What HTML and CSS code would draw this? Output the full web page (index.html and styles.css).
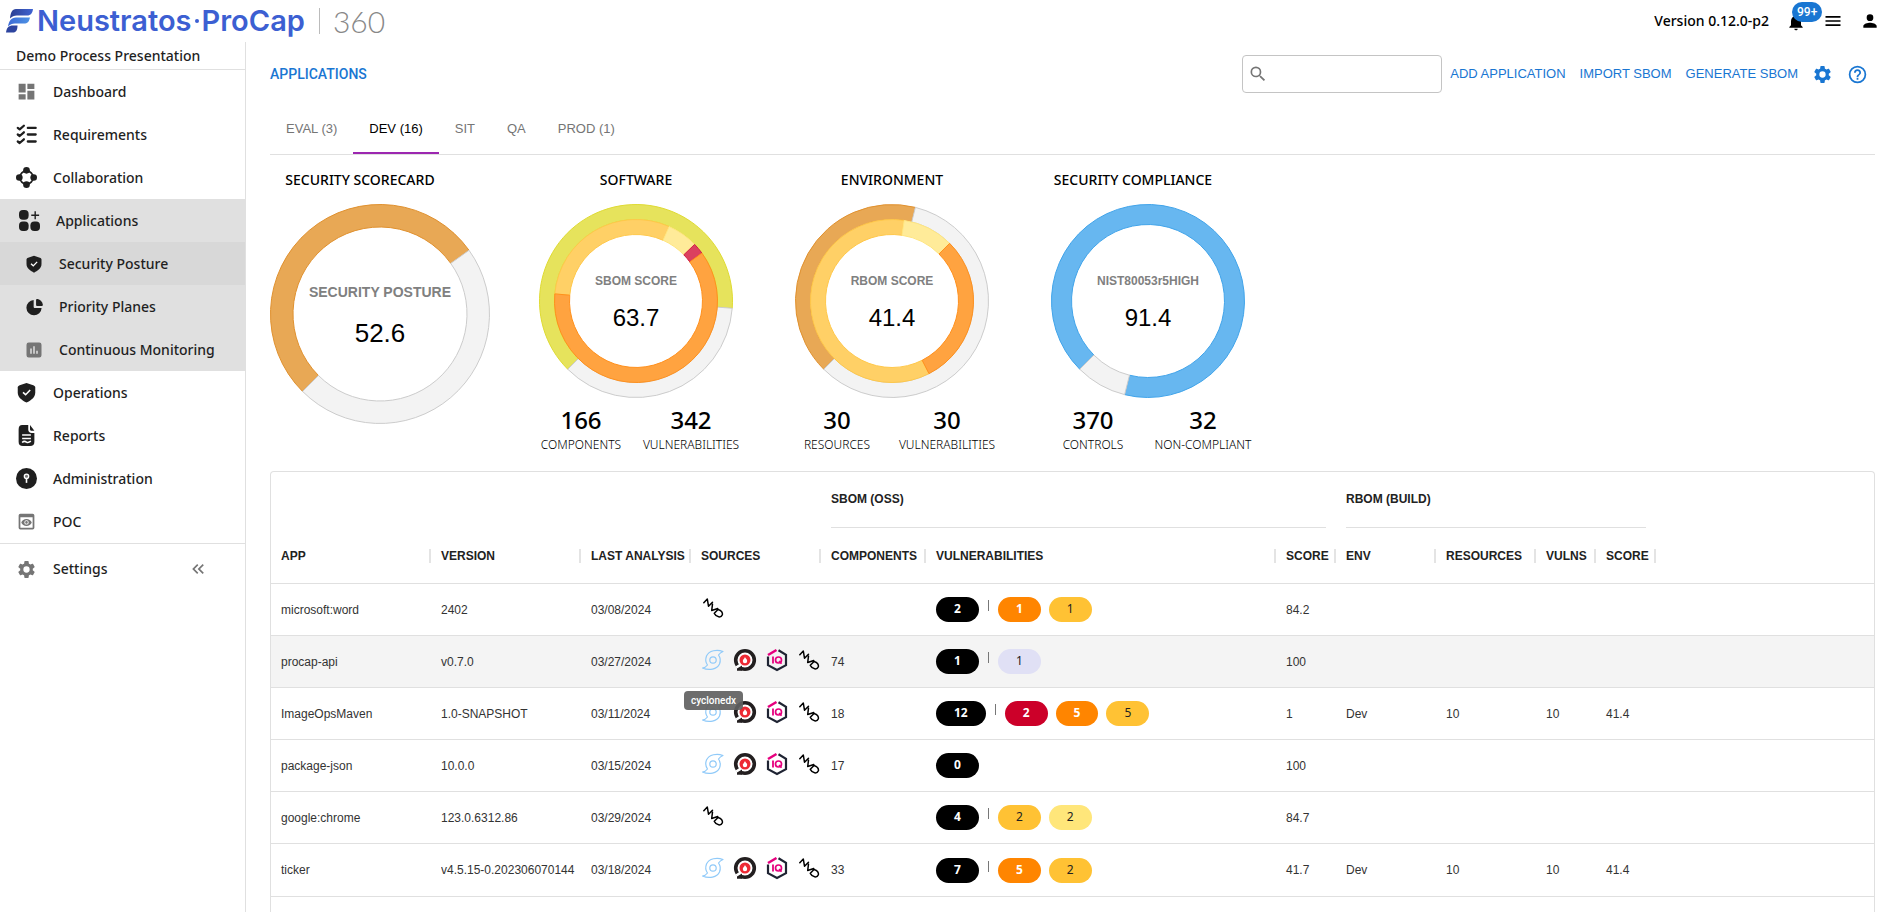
FILE: index.html
```html
<!DOCTYPE html>
<html lang="en">
<head>
<meta charset="utf-8">
<title>Neustratos ProCap 360 - Applications</title>
<link rel="stylesheet" href="styles.css">
</head>
<body>
<svg class="sprite" aria-hidden="true">
  <symbol id="i-cyclone" viewBox="0 0 24 24"><g fill="none" stroke="#90caf9" stroke-width="1.2" stroke-linejoin="round"><circle cx="12" cy="12" r="3.200"/><path d="M22 3.500C16 1 8 2.500 5.500 8C4 12 5 15 6.500 17C5 19 3.500 19.800 1.500 20C8 22.800 16 21.500 18.500 16C20 12 19 9 17.500 7C19 5 20.300 4.200 22 3.500Z"/></g></symbol>
  <symbol id="i-target" viewBox="0 0 24 24"><circle cx="12" cy="12" r="9.300" fill="#fff" stroke="#231f20" stroke-width="3.600"/><path d="M2.500 18.500L8.500 14.500L9.500 17L5.500 21.500Z" fill="#fff"/><path d="M4 20.500L9 17.500V22.800H4Z" fill="#231f20"/><circle cx="12" cy="12" r="5.500" fill="#ed2a34"/><path d="M12 9C12.300 10.400 14.200 11.200 14.200 13A2.200 2.200 0 0 1 9.800 13C9.800 11.800 11 11.200 12 9Z" fill="#fff"/></symbol>
  <symbol id="i-iq" viewBox="0 0 24 24"><g fill="none" stroke-width="2.200"><path d="M13.500 2.200L21 6.800V17.200L12 22L3 17.200V8.500" stroke="#1f2433"/><path d="M3 7L11.500 2" stroke="#e6007e" stroke-width="2.600"/><path d="M8 8.500V15.500" stroke="#e6007e" stroke-width="1.800"/><circle cx="13.500" cy="12" r="3" stroke="#e6007e" stroke-width="1.700"/><path d="M14 13L16.500 15.800" stroke="#e6007e" stroke-width="1.600"/></g></symbol>
  <symbol id="i-nvd" viewBox="0 0 24 24"><path d="M2.800 6.800L6.300 3L7.500 10.200L11.500 6.200M11.500 8.200L10.700 14.500L16.800 12.500M13.300 17.300L17 13.500C20 14.500 21.800 16.500 21.400 18.800C20 22 15.500 21.500 13.300 17.300Z" fill="none" stroke="#000" stroke-width="1.500" stroke-linejoin="round" stroke-linecap="round"/></symbol>
  <symbol id="i-gear" viewBox="0 0 24 24"><path d="M19.140 12.940c.04-.3.06-.61.06-.94s-.02-.64-.07-.94l2.030-1.580a.49.490 0 0 0 .12-.61l-1.920-3.320a.49.490 0 0 0-.59-.22l-2.390.96c-.5-.38-1.030-.7-1.620-.94l-.36-2.540a.48.480 0 0 0-.48-.41h-3.840a.47.470 0 0 0-.47.410l-.36 2.540c-.59.240-1.130.570-1.620.940l-2.390-.96a.48.480 0 0 0-.59.220L2.740 8.870a.47.470 0 0 0 .12.610l2.030 1.580c-.05.300-.09.630-.09.940s.02.640.070.940l-2.030 1.580a.49.490 0 0 0-.12.610l1.920 3.320c.12.220.370.290.590.220l2.390-.96c.5.380 1.030.700 1.620.940l.36 2.540c.05.240.240.410.480.410h3.840c.24 0 .44-.17.470-.41l.36-2.540c.59-.24 1.130-.56 1.620-.94l2.390.96c.22.080.470 0 .59-.22l1.920-3.320a.47.470 0 0 0-.12-.61zM12 15.600A3.600 3.600 0 1 1 12 8.400a3.600 3.600 0 0 1 0 7.200"/></symbol>
  <symbol id="i-shield" viewBox="0 0 24 24"><path d="M12 1L4.200 3.600C2.800 4.100 2 4.900 2 6.400V12C2 17.500 6.500 20.800 12 23.500C17.500 20.800 22 17.500 22 12V6.400C22 4.900 21.200 4.100 19.800 3.600Z"/><path d="M8 11.800L11 14.500L16.200 9.200" fill="none" stroke="#fff" stroke-width="1.800"/></symbol>
</svg>

<header class="topbar">
  <div class="brand">
    <svg class="brand-mark" viewBox="0 0 28 24" aria-hidden="true"><defs><linearGradient id="g1"><stop offset="0" stop-color="#2b3f92"/><stop offset="1" stop-color="#3f63d2"/></linearGradient><linearGradient id="g2"><stop offset="0" stop-color="#3b6ad6"/><stop offset="1" stop-color="#4d92e4"/></linearGradient></defs><path d="M10 0H27C26.500 4 25 6.500 21 6.500H11C8 6.500 6 7.500 4 9.500C4.500 4 6 0 10 0Z" fill="url(#g1)"/><path d="M10 8.500H24C23 13 21.500 14.500 18 14.500H9C6 14.500 4 15.500 2 17.500C3 12 5 8.500 10 8.500Z" fill="url(#g2)"/><path d="M7 16.500H11.500C11.500 21 10 23.500 7 23.500H0C.5 19 2.500 16.500 7 16.500Z" fill="#2d449f"/></svg>
    <span class="brand-name">Neustratos</span><span class="brand-dot"></span><span class="brand-name">ProCap</span>
    <span class="brand-edition">360</span>
  </div>
  <div class="topbar-tools">
    <span class="version">Version 0.12.0-p2</span>
    <button class="icon-btn bell" aria-label="Notifications"><svg viewBox="0 0 24 24"><path d="M12 22c1.100 0 2-.9 2-2h-4a2 2 0 0 0 2 2m6-6v-5c0-3.070-1.640-5.640-4.500-6.320V4a1.500 1.500 0 0 0-3 0v.68C7.630 5.360 6 7.920 6 11v5l-2 2v1h16v-1z"/></svg><span class="badge">99+</span></button>
    <button class="icon-btn" aria-label="Menu"><svg viewBox="0 0 24 24"><path d="M3 18h18v-2H3zm0-5h18v-2H3zm0-7v2h18V6z"/></svg></button>
    <button class="icon-btn" aria-label="Account"><svg viewBox="0 0 24 24"><path d="M12 12a4 4 0 1 0 0-8 4 4 0 0 0 0 8m0 2c-2.670 0-8 1.340-8 4v2h16v-2c0-2.660-5.330-4-8-4"/></svg></button>
  </div>
</header>

<div class="shell">
  <nav class="sidebar" aria-label="Main">
    <div class="project">Demo Process Presentation</div>
    <a class="nav-item" href="#"><svg class="grey" viewBox="0 0 24 24"><path d="M3 13h8V3H3zm0 8h8v-6H3zm10 0h8V11h-8zm0-18v6h8V3z"/></svg>Dashboard</a>
    <a class="nav-item" href="#"><svg viewBox="0 0 24 24"><path d="M2 4.500L4.200 6.200L9 2M2 12L4.200 13.700L9 9.500M2 20L4.200 21.700L9 17.500M13.500 4.500H22.500M13.500 12H22.500M13.500 20H22.500" fill="none" stroke="currentColor" stroke-width="2.600" stroke-linecap="round" stroke-linejoin="round"/></svg>Requirements</a>
    <a class="nav-item" href="#"><svg viewBox="0 0 24 24"><circle cx="12" cy="12" r="7.600" fill="none" stroke="currentColor" stroke-width="2"/><circle cx="12" cy="3.800" r="3.800"/><circle cx="12" cy="20.200" r="3.800"/><circle cx="3.800" cy="12" r="3.800"/><circle cx="20.200" cy="12" r="3.800"/></svg>Collaboration</a>
    <div class="nav-group">
      <a class="nav-item nav-parent" href="#"><svg viewBox="0 0 24 24"><rect x="0" y="0" width="11" height="11" rx="4.500"/><rect x="0" y="13" width="11" height="11" rx="4.500"/><rect x="13" y="13" width="11" height="11" rx="4.500"/><path d="M18.500 1.500V10.500M14 6H23" stroke="currentColor" stroke-width="1.600"/></svg>Applications</a>
      <a class="nav-item nav-sub active" href="#"><svg viewBox="0 0 24 24"><use href="#i-shield"/></svg>Security Posture</a>
      <a class="nav-item nav-sub" href="#"><svg viewBox="-2 -1 26 26"><path d="M10.500 2V11.500C10.500 12.800 11.200 13.500 12.500 13.500H22A11 11 0 1 1 10.500 2Z"/><path d="M14 2C14 .500 15 0 16.500.400C20 1.500 22.500 4 23.600 7.500C24 9 23.500 10.500 22 10.500H15.500C14.500 10.500 14 10 14 9Z"/></svg>Priority Planes</a>
      <a class="nav-item nav-sub" href="#"><svg class="grey" viewBox="0 0 24 24"><path d="M19 2H5a3 3 0 0 0-3 3v14a3 3 0 0 0 3 3h14a3 3 0 0 0 3-3V5a3 3 0 0 0-3-3M9 17H7v-7h2zm4 0h-2V7h2zm4 0h-2v-4h2z"/></svg>Continuous Monitoring</a>
    </div>
    <a class="nav-item" href="#"><svg viewBox="0 0 24 24"><use href="#i-shield"/></svg>Operations</a>
    <a class="nav-item" href="#"><svg viewBox="0 0 24 24"><path d="M7 0H14V5C14 7.500 15.500 9 18 9H21V19C21 22.500 19.500 24 16 24H8C4.500 24 3 22.500 3 19V5C3 1.500 4.500 0 7 0ZM16 0L21 6.500H18C16.500 6.500 16 6 16 4.500Z"/><path d="M7 11.500H17M7 15.500H17M7 20C9 18 10.500 18.500 12 19.500S15 20 17 18.500" fill="none" stroke="#fff" stroke-width="1.700"/></svg>Reports</a>
    <a class="nav-item" href="#"><svg viewBox="0 0 24 24"><circle cx="12" cy="12" r="12"/><circle cx="12" cy="9.500" r="2.500" fill="#777" stroke="#fff" stroke-width="1.500"/><path d="M12 12V17" stroke="#fff" stroke-width="1.800"/></svg>Administration</a>
    <a class="nav-item" href="#"><svg class="grey" viewBox="0 0 24 24"><path d="M19 3H5a2 2 0 0 0-2 2v14a2 2 0 0 0 2 2h14a2 2 0 0 0 2-2V5a2 2 0 0 0-2-2m0 16H5V7h14zm-5.500-6a1.500 1.500 0 1 1-3 0 1.500 1.500 0 0 1 3 0M12 9c-2.730 0-5.060 1.660-6 4 .94 2.340 3.270 4 6 4s5.060-1.660 6-4c-.94-2.340-3.270-4-6-4m0 6.500a2.500 2.500 0 1 1 0-5 2.500 2.500 0 0 1 0 5"/></svg>POC</a>
    <div class="nav-footer">
      <a class="nav-item" href="#"><svg class="grey" viewBox="0 0 24 24"><use href="#i-gear"/></svg>Settings</a>
      <button class="collapse" aria-label="Collapse menu"><svg viewBox="0 0 24 24"><path d="M17.590 18L19 16.590 14.420 12 19 7.410 17.590 6l-6 6zM11 18l1.410-1.410L7.830 12l4.580-4.590L11 6l-6 6z"/></svg></button>
    </div>
  </nav>

  <main class="content">
    <div class="page-head">
      <h1>APPLICATIONS</h1>
      <div class="actions">
        <label class="search"><svg viewBox="0 0 24 24"><path d="M15.500 14h-.79l-.28-.27A6.470 6.470 0 0 0 16 9.500 6.500 6.500 0 1 0 9.500 16c1.610 0 3.090-.59 4.230-1.570l.27.280v.79l5 4.990L20.490 19zm-6 0a4.500 4.500 0 1 1 0-9 4.500 4.500 0 0 1 0 9"/></svg><input type="search" aria-label="Search applications"></label>
        <button class="link-btn">ADD APPLICATION</button>
        <button class="link-btn">IMPORT SBOM</button>
        <button class="link-btn">GENERATE SBOM</button>
        <button class="tool-btn" aria-label="Settings"><svg viewBox="0 0 24 24"><use href="#i-gear"/></svg></button>
        <button class="tool-btn" aria-label="Help"><svg viewBox="0 0 24 24"><path d="M11 18h2v-2h-2zm1-16a10 10 0 1 0 0 20 10 10 0 0 0 0-20m0 18a8 8 0 1 1 0-16 8 8 0 0 1 0 16m0-14a4 4 0 0 0-4 4h2a2 2 0 1 1 4 0c0 2-3 1.750-3 5h2c0-2.250 3-2.500 3-5a4 4 0 0 0-4-4"/></svg></button>
      </div>
    </div>

    <div class="tabs" role="tablist">
      <button class="tab" role="tab">EVAL (3)</button>
      <button class="tab selected" role="tab" aria-selected="true">DEV (16)</button>
      <button class="tab" role="tab">SIT</button>
      <button class="tab" role="tab">QA</button>
      <button class="tab" role="tab">PROD (1)</button>
    </div>

    <section class="scores">
      <article class="card card-main">
        <h2>SECURITY SCORECARD</h2>
        <div class="gauge large"><svg viewBox="-110 -110 220 220" data-rings='[[87,109.5,[[225,414.4,"amber"],[54.4,225,"rest"]]]]'></svg><div class="gauge-text"><span class="gauge-label">SECURITY POSTURE</span><span class="gauge-value">52.6</span></div></div>
      </article>
      <article class="card">
        <h2>SOFTWARE</h2>
        <div class="gauge"><svg viewBox="-97 -97 194 194" data-rings='[[81.500,96.500,[[225,454.3,"olive"],[94.3,225,"rest"]]],[66.500,81.500,[[275,384,"yellow"],[24,46,"pale"],[46,54,"red"],[54,275,"orange"]]]]'></svg><div class="gauge-text"><span class="gauge-label">SBOM SCORE</span><span class="gauge-value">63.7</span></div></div>
        <dl class="counts"><div><dt>COMPONENTS</dt><dd>166</dd></div><div><dt>VULNERABILITIES</dt><dd>342</dd></div></dl>
      </article>
      <article class="card">
        <h2>ENVIRONMENT</h2>
        <div class="gauge"><svg viewBox="-97 -97 194 194" data-rings='[[81.500,96.500,[[225,374,"amber"],[14,225,"rest"]]],[66.500,81.500,[[153,368.6,"yellow"],[8.6,45,"pale"],[45,153,"orange"]]]]'></svg><div class="gauge-text"><span class="gauge-label">RBOM SCORE</span><span class="gauge-value">41.4</span></div></div>
        <dl class="counts"><div><dt>RESOURCES</dt><dd>30</dd></div><div><dt>VULNERABILITIES</dt><dd>30</dd></div></dl>
      </article>
      <article class="card card-compliance">
        <h2>SECURITY COMPLIANCE</h2>
        <div class="gauge"><svg viewBox="-97 -97 194 194" data-rings='[[76.500,96.500,[[225,554,"blue"],[194,225,"rest"]]]]'></svg><div class="gauge-text"><span class="gauge-label">NIST80053r5HIGH</span><span class="gauge-value">91.4</span></div></div>
        <dl class="counts"><div><dt>CONTROLS</dt><dd>370</dd></div><div><dt>NON-COMPLIANT</dt><dd>32</dd></div></dl>
      </article>
    </section>

    <div class="grid-box">
      <table class="grid">
        <colgroup><col class="w160"><col class="w150"><col class="w110"><col class="w130"><col class="w105"><col class="w350"><col class="w60"><col class="w100"><col class="w100"><col class="w60"><col class="w60"><col></colgroup>
        <thead>
          <tr class="groups"><td colspan="4"></td><th colspan="3" scope="colgroup"><span>SBOM (OSS)</span></th><th colspan="4" scope="colgroup"><span>RBOM (BUILD)</span></th><td></td></tr>
          <tr class="heads"><th>APP</th><th>VERSION</th><th>LAST ANALYSIS</th><th>SOURCES</th><th>COMPONENTS</th><th>VULNERABILITIES</th><th>SCORE</th><th>ENV</th><th>RESOURCES</th><th>VULNS</th><th>SCORE</th><td></td></tr>
        </thead>
        <tbody>
          <tr><td>microsoft:word</td><td>2402</td><td>03/08/2024</td><td><div class="sources"><svg><use href="#i-nvd"/></svg></div></td><td></td><td><div class="chips"><b class="chip total">2</b><i class="bar"></i><b class="chip high">1</b><span class="chip medium">1</span></div></td><td>84.2</td><td></td><td></td><td></td><td></td><td></td></tr>
          <tr class="hovered"><td>procap-api</td><td>v0.7.0</td><td>03/27/2024</td><td><div class="sources"><span class="tip-anchor"><svg><use href="#i-cyclone"/></svg><span class="tooltip" role="tooltip">cyclonedx</span></span><svg><use href="#i-target"/></svg><svg><use href="#i-iq"/></svg><svg><use href="#i-nvd"/></svg></div></td><td>74</td><td><div class="chips"><b class="chip total">1</b><i class="bar"></i><span class="chip none">1</span></div></td><td>100</td><td></td><td></td><td></td><td></td><td></td></tr>
          <tr><td>ImageOpsMaven</td><td>1.0-SNAPSHOT</td><td>03/11/2024</td><td><div class="sources"><svg><use href="#i-cyclone"/></svg><svg><use href="#i-target"/></svg><svg><use href="#i-iq"/></svg><svg><use href="#i-nvd"/></svg></div></td><td>18</td><td><div class="chips"><b class="chip total">12</b><i class="bar"></i><b class="chip critical">2</b><b class="chip high">5</b><span class="chip medium">5</span></div></td><td>1</td><td>Dev</td><td>10</td><td>10</td><td>41.4</td><td></td></tr>
          <tr><td>package-json</td><td>10.0.0</td><td>03/15/2024</td><td><div class="sources"><svg><use href="#i-cyclone"/></svg><svg><use href="#i-target"/></svg><svg><use href="#i-iq"/></svg><svg><use href="#i-nvd"/></svg></div></td><td>17</td><td><div class="chips"><b class="chip total">0</b></div></td><td>100</td><td></td><td></td><td></td><td></td><td></td></tr>
          <tr><td>google:chrome</td><td>123.0.6312.86</td><td>03/29/2024</td><td><div class="sources"><svg><use href="#i-nvd"/></svg></div></td><td></td><td><div class="chips"><b class="chip total">4</b><i class="bar"></i><span class="chip medium">2</span><span class="chip low">2</span></div></td><td>84.7</td><td></td><td></td><td></td><td></td><td></td></tr>
          <tr><td>ticker</td><td><div class="clip">v4.5.15-0.202306070144</div></td><td>03/18/2024</td><td><div class="sources"><svg><use href="#i-cyclone"/></svg><svg><use href="#i-target"/></svg><svg><use href="#i-iq"/></svg><svg><use href="#i-nvd"/></svg></div></td><td>33</td><td><div class="chips"><b class="chip total">7</b><i class="bar"></i><b class="chip high">5</b><span class="chip medium">2</span></div></td><td>41.7</td><td>Dev</td><td>10</td><td>10</td><td>41.4</td><td></td></tr>
        </tbody>
      </table>
    </div>
  </main>
</div>
<script src="gauges.js"></script>
</body>
</html>
```

FILE: styles.css
```css
* { box-sizing: border-box; }
body {
  margin: 0;
  height: 100vh;
  display: flex;
  flex-direction: column;
  overflow: hidden;
  background: #fff;
  color: #000;
  font-family: "Liberation Sans", Arial, sans-serif;
  font-size: 12px;
}
button { border: 0; padding: 0; background: none; font: inherit; color: inherit; cursor: pointer; }
svg { display: block; fill: currentColor; flex: none; }
.sprite { position: absolute; width: 0; height: 0; }

.topbar { display: flex; justify-content: space-between; align-items: center; height: 42px; flex: none; padding-left: 6px; }
.brand { display: flex; align-items: center; color: #3c5fd2; }
.brand-mark { width: 28px; height: 24px; margin-right: 3px; }
.brand-name { font: 600 29px/40px Inter, sans-serif; }
.brand-dot { width: 4px; height: 4px; margin: 0 3px; border-radius: 2px; background: #3c5fd2; }
.brand-edition { margin-left: 14px; padding-left: 13px; border-left: 1px solid #bbb; color: #888; font: 300 30px/26px Lato, sans-serif; }
.topbar-tools { display: flex; align-items: center; gap: 17px; }
.version { font: 500 14px/20px "Noto Sans", sans-serif; }
.icon-btn { position: relative; display: flex; }
.icon-btn svg { width: 20px; height: 20px; }
.bell svg { margin-top: 2px; }
.badge { position: absolute; left: 6px; top: -8px; height: 20px; padding: 0 5px; border-radius: 10px; background: #1976d2; color: #fff; font: 500 12px/20px Roboto, sans-serif; }

.shell { display: flex; flex: 1; min-height: 0; }
.sidebar { width: 246px; flex: none; border-right: 1px solid #e0e0e0; color: #1f1f1f; font: 500 14px/20px "Noto Sans", sans-serif; }
.project { height: 28px; padding: 4px 16px; border-bottom: 1px solid #e0e0e0; }
.nav-item { display: flex; align-items: center; gap: 16px; height: 43px; padding-left: 16px; color: inherit; text-decoration: none; }
.nav-item svg { width: 21px; height: 21px; }
.nav-item .grey, .collapse { color: #757575; }
.nav-group { background: #e0e0e0; }
.nav-parent { padding-left: 19px; }
.nav-sub { padding-left: 25px; }
.nav-sub svg { width: 18px; height: 18px; }
.nav-sub.active { background: #d8d8d8; }
.nav-footer { display: flex; align-items: center; justify-content: space-between; height: 51px; padding-right: 37px; border-top: 1px solid #e0e0e0; }
.collapse svg { width: 20px; height: 20px; }

.content { flex: 1; min-width: 0; display: flex; flex-direction: column; padding: 13px 5px 0 24px; }
.page-head { display: flex; align-items: center; justify-content: space-between; height: 38px; }
h1 { margin: 0; color: #1976d2; font: 500 14px/20px Roboto, sans-serif; }
.actions { display: flex; align-items: center; gap: 14px; padding-right: 7px; color: #1976d2; }
.search { display: flex; align-items: center; width: 200px; height: 38px; margin-right: -6px; padding-left: 5px; border: 1px solid #c4c4c4; border-radius: 4px; color: #757575; }
.search svg { width: 20px; height: 20px; }
.search input { flex: 1; min-width: 0; border: 0; outline: 0; background: none; font: inherit; }
.link-btn { padding-bottom: 2px; font-size: 13px; }
.tool-btn svg { width: 21px; height: 21px; }

.tabs { display: flex; height: 62px; border-bottom: 1px solid #e0e0e0; }
.tab { padding: 10px 16px 0; color: #757575; font-size: 13px; }
.tab.selected { color: #000; border-bottom: 2px solid #9c27b0; padding-top: 12px; }

.scores { display: flex; padding-top: 15px; height: 316px; flex: none; }
.card { width: 256px; display: flex; flex-direction: column; align-items: center; }
.card-main { width: 220px; margin-right: 18px; }
h2 { margin: 0 0 14px; font: 500 14px/20px "Noto Sans", sans-serif; }
.card-main h2 { padding-right: 40px; }
.card-compliance h2 { padding-right: 30px; }
.gauge { display: grid; width: 194px; height: 194px; }
.gauge.large { width: 220px; height: 220px; }
.gauge > * { grid-area: 1 / 1; }
.gauge svg { width: 100%; height: 100%; }
.gauge-text { display: flex; flex-direction: column; align-items: center; justify-content: center; gap: 16px; padding-top: 4px; }
.gauge-label { color: #808080; font-weight: 700; line-height: 14px; }
.gauge-value { font-size: 24px; line-height: 28px; }
.large .gauge-text { gap: 20px; }
.large .gauge-label { font-size: 14px; }
.large .gauge-value { font-size: 26px; }
.amber { fill: #e8a855; stroke: #e0912f; }
.rest { fill: #f3f3f3; stroke: #ccc; }
.olive { fill: #e6e35c; stroke: #dfdb33; }
.yellow { fill: #ffd066; stroke: #ffc84a; }
.pale { fill: #ffeb99; stroke: #ffe680; }
.red { fill: #db405f; stroke: #d21f44; }
.orange { fill: #ffa340; stroke: #ff901c; }
.blue { fill: #67b7f0; stroke: #41a4ea; }
.counts { display: flex; margin: 6px 0 0; font-family: "Noto Sans", sans-serif; }
.counts div { display: flex; flex-direction: column-reverse; align-items: center; width: 110px; }
.counts dt { font-weight: 300; line-height: 18px; }
.counts dd { margin: 0; font-size: 24px; line-height: 32px; font-weight: 500; }

.grid-box { flex: 1; min-height: 0; border: 1px solid #e0e0e0; border-bottom: 0; border-radius: 4px 4px 0 0; }
.grid { width: 100%; table-layout: fixed; border-collapse: separate; border-spacing: 0; color: #333; }
.grid th, .grid td { padding: 0 10px; text-align: left; white-space: nowrap; }
.grid th { color: #222; font-weight: 700; }
.groups > * { height: 56px; }
.groups span { display: block; height: 56px; line-height: 54px; border-bottom: 1px solid #e0e0e0; }
.heads > * { height: 56px; border-bottom: 1px solid #e0e0e0; }
.grid .heads th { padding-right: 0; background: linear-gradient(#e4e4e4, #e4e4e4) right center / 2px 14px no-repeat; }
.grid tbody td { height: 52px; border-bottom: 1px solid #e0e0e0; }
.grid tbody tr:last-child td { height: 53px; }
.hovered { background: #f4f4f4; }
.w160 { width: 160px; } .w150 { width: 150px; } .w110 { width: 110px; } .w130 { width: 130px; }
.w105 { width: 105px; } .w350 { width: 350px; } .w100 { width: 100px; } .w60 { width: 60px; }
.clip { overflow: hidden; margin-right: -10px; }
.sources { display: flex; gap: 8px; padding-bottom: 4px; }
.grid tbody td:nth-child(4) { padding-right: 0; }
.sources svg { width: 24px; height: 24px; }
.tip-anchor { position: relative; }
.tooltip { position: absolute; z-index: 1; left: -17px; top: 43px; padding: 0 7px; border-radius: 4px; background: rgba(97, 97, 97, 0.92); color: #fff; font: 500 10px/19px Roboto, sans-serif; }
.chips { display: flex; gap: 8px; align-items: center; font-family: "Noto Sans", sans-serif; }
.chip { height: 25px; padding: 0 18px; border-radius: 13px; line-height: 24px; font-weight: 400; color: #222; }
b.chip { font-weight: 700; color: #fff; }
.total { background: #000; }
.critical { background: #cc0029; }
.high { background: #ff8500; }
.medium { background: #ffc234; }
.low { background: #ffe67a; }
.none { background: #e0e0f5; }
.bar { width: 1px; height: 11px; margin: 0 1px 8px; background: #777; }
```

FILE: gauges.js
```js
// Draws each gauge as annular sectors. Angles are degrees clockwise from the top.
const point = (r, deg) => {
  const a = (deg * Math.PI) / 180;
  return `${(r * Math.sin(a)).toFixed(2)} ${(-r * Math.cos(a)).toFixed(2)}`;
};

const sector = (inner, outer, from, to) => {
  const large = to - from > 180 ? 1 : 0;
  return `M${point(outer, from)}A${outer} ${outer} 0 ${large} 1 ${point(outer, to)}` +
    `L${point(inner, to)}A${inner} ${inner} 0 ${large} 0 ${point(inner, from)}Z`;
};

document.querySelectorAll('svg[data-rings]').forEach((svg) => {
  for (const [inner, outer, parts] of JSON.parse(svg.dataset.rings)) {
    for (const [from, to, tone] of parts) {
      const path = document.createElementNS('http://www.w3.org/2000/svg', 'path');
      path.setAttribute('d', sector(inner, outer, from, to));
      path.setAttribute('class', tone);
      svg.append(path);
    }
  }
});
```
